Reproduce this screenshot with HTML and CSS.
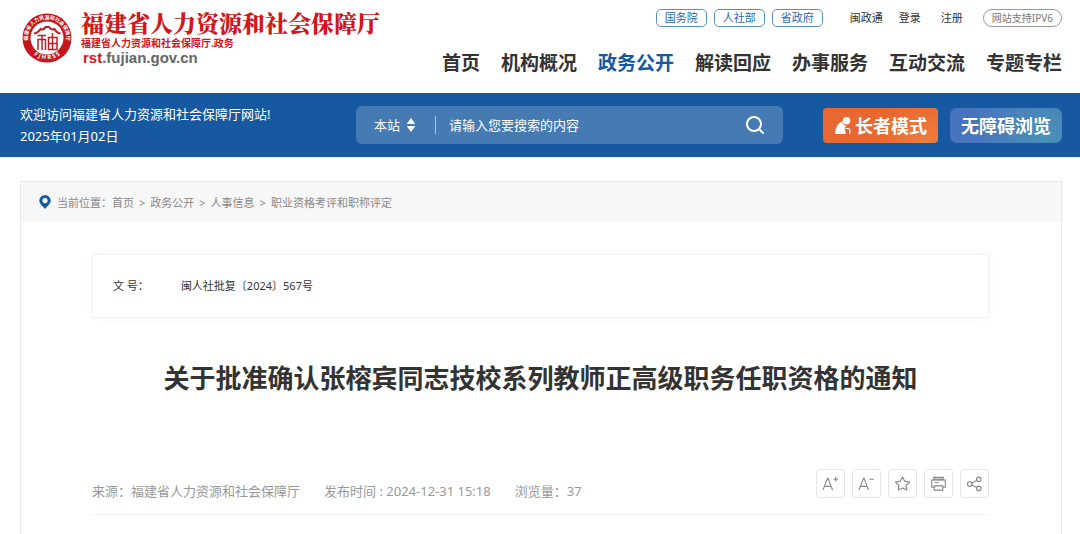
FILE: index.html
```html
<!DOCTYPE html>
<html lang="zh-CN">
<head>
  <meta charset="utf-8">
  <title>福建省人力资源和社会保障厅</title>
  <link rel="stylesheet" href="styles.css">
</head>
<body>
  <header class="header">
    <a class="logo" href="#">
      <svg class="seal" viewBox="0 0 100 100">
        <defs>
          <path id="arc-top" d="M14 64 A38.500 38.500 0 1 1 86 64"/>
          <path id="arc-bottom" d="M9 66 A45 45 0 0 0 91 66"/>
        </defs>
        <circle cx="50" cy="50" r="49" fill="#c4161c"/>
        <circle cx="50" cy="50" r="33" fill="#fff"/>
        <text class="seal-cn"><textPath href="#arc-top" startOffset="50%">福建省人力资源和社会保障厅</textPath></text>
        <text class="seal-en"><textPath href="#arc-bottom" startOffset="50%">F J H R S S</textPath></text>
        <g fill="none" stroke="#b5232a" stroke-width="4">
          <path d="M24 41 Q32 40 37 32 Q44 35 47 28 H54 Q58 35 65 32 Q69 40 77 41"/>
          <path d="M31 45 H48 M40 45 V74 M32 74 V53 H47 V74" stroke-width="3"/>
          <path d="M61 40 V73 M53 73 V49 H70 V73 Z M53 61 H70" stroke-width="3"/>
        </g>
      </svg>
      <span class="logo-text">
        <span class="logo-title">福建省人力资源和社会保障厅</span>
        <span class="logo-sub">福建省人力资源和社会保障厅.政务</span>
        <span class="logo-url"><b>rst</b>.fujian.gov.cn</span>
      </span>
    </a>
    <div class="header-right">
      <div class="top-links">
        <a class="tag" href="#">国务院</a>
        <a class="tag" href="#">人社部</a>
        <a class="tag" href="#">省政府</a>
        <div class="account">
          <a href="#">闽政通</a>
          <a href="#">登录</a>
          <a class="register" href="#">注册</a>
        </div>
        <span class="ipv6">网站支持IPV6</span>
      </div>
      <nav class="nav">
        <a href="#">首页</a>
        <a href="#">机构概况</a>
        <a class="active" href="#">政务公开</a>
        <a href="#">解读回应</a>
        <a href="#">办事服务</a>
        <a href="#">互动交流</a>
        <a href="#">专题专栏</a>
      </nav>
    </div>
  </header>

  <div class="bar">
    <div class="welcome">
      <div>欢迎访问福建省人力资源和社会保障厅网站!</div>
      <div>2025年01月02日</div>
    </div>
    <form class="search">
      <div class="scope">
        <select aria-label="搜索范围">
          <option>本站</option>
        </select>
        <svg width="8" height="14" viewBox="0 0 8 14" fill="#fff">
          <path d="M4 0 L8 5.5 Q8 6 7.5 6 H.5 Q0 6 0 5.5 Z M4 14 L8 8.5 Q8 8 7.5 8 H.5 Q0 8 0 8.5 Z"/>
        </svg>
      </div>
      <input type="text" aria-label="搜索内容" placeholder="请输入您要搜索的内容">
      <button class="search-btn" type="button" aria-label="搜索">
        <svg width="20" height="20" viewBox="0 0 20 20" fill="none" stroke="#fff" stroke-width="2">
          <circle cx="9" cy="9" r="7"/>
          <path d="M14 14 L18 18" stroke-linecap="round"/>
        </svg>
      </button>
    </form>
    <div class="modes">
      <button class="mode elder" type="button">
        <svg width="16" height="19" viewBox="0 0 16 19" fill="#fff">
          <circle cx="11.500" cy="4.800" r="3.800"/>
          <path d="M7.300 5.500 Q7.800 9.500 11.500 10 L9.500 12 L11 18 H0 Q0 12 3 8.500 Q5 6 7.300 5.500 Z"/>
          <path d="M10.500 12.500 H13 Q14.800 12.500 14.800 14.500 V18" fill="none" stroke="#fff" stroke-width="1.200"/>
        </svg>
        长者模式
      </button>
      <button class="mode barrier" type="button">无障碍浏览</button>
    </div>
  </div>

  <main class="page">
    <div class="crumbs">
      <svg width="12" height="14" viewBox="0 0 12 14">
        <path d="M6 0 A5.700 5.700 0 0 1 11.700 5.700 C11.700 9 8 11 6 14 C4 11 .3 9 .3 5.700 A5.700 5.700 0 0 1 6 0 Z" fill="#1759a0"/>
        <circle cx="6" cy="5.600" r="2.600" fill="#fff"/>
      </svg>
      <span>当前位置：</span>
      <a href="#">首页</a><i>&gt;</i>
      <a href="#">政务公开</a><i>&gt;</i>
      <a href="#">人事信息</a><i>&gt;</i>
      <a href="#">职业资格考评和职称评定</a>
    </div>

    <article class="article">
      <dl class="doc-info">
        <dt>文 号：</dt>
        <dd>闽人社批复〔2024〕567号</dd>
      </dl>
      <h1>关于批准确认张榕宾同志技校系列教师正高级职务任职资格的通知</h1>
      <div class="meta">
        <div class="meta-text">
          <span>来源：福建省人力资源和社会保障厅</span>
          <span>发布时间 : 2024-12-31 15:18</span>
          <span>浏览量：37</span>
        </div>
        <div class="tools">
          <button type="button" aria-label="放大字号">
            <svg viewBox="0 0 18 18"><path d="M1 16 L5.800 3.500 H6.400 L11.200 16 M2.800 12 H9.400 M12 4.500 H17 M14.500 2 V7"/></svg>
          </button>
          <button type="button" aria-label="缩小字号">
            <svg viewBox="0 0 18 18"><path d="M1 16 L5.800 3.500 H6.400 L11.200 16 M2.800 12 H9.400 M12 4.500 H17"/></svg>
          </button>
          <button type="button" aria-label="收藏">
            <svg viewBox="0 0 18 18"><path d="M9 2 L11.300 6.500 L16.500 7.400 L12.800 11 L13.600 16 L9 13.800 L4.400 16 L5.200 11 L1.500 7.400 L6.700 6.500 Z" stroke-linejoin="round"/></svg>
          </button>
          <button type="button" aria-label="打印">
            <svg viewBox="0 0 18 18"><path d="M4 5 V2.500 H14 V5 Z" fill="#ccc"/><path d="M4.500 13 H1.800 V5.300 H16.200 V13 H13.500 M4.500 11.500 H13.500 V16 H4.500 Z M5 8 H9"/></svg>
          </button>
          <button type="button" aria-label="分享">
            <svg viewBox="0 0 18 18"><circle cx="4" cy="9.500" r="2.400"/><circle cx="13.500" cy="4.600" r="2.400"/><circle cx="13.500" cy="14.200" r="2.400"/><path d="M6.200 8.500 L11.300 5.800 M6.200 10.600 L11.300 13.200"/></svg>
          </button>
        </div>
      </div>
    </article>
  </main>
</body>
</html>
```

FILE: styles.css
```css
* {
  box-sizing: border-box;
}

body {
  margin: 0;
  min-height: 100vh;
  display: flex;
  flex-direction: column;
  background: #fff;
  color: #333;
  font-family: "Noto Sans", "Noto Sans CJK SC", sans-serif;
  font-size: 13px;
}

a {
  color: inherit;
  text-decoration: none;
}

button,
input,
select {
  margin: 0;
  padding: 0;
  border: 0;
  background: none;
  color: inherit;
  font: inherit;
}

/* header */
.header {
  display: flex;
  justify-content: space-between;
  height: 93px;
  padding: 9px 18px 0 22px;
}

.logo {
  display: flex;
  align-items: flex-start;
  gap: 9px;
}

.seal {
  width: 50px;
  height: 50px;
  margin-top: 4px;
}

.seal text {
  fill: #fff;
  text-anchor: middle;
  font-weight: bold;
}

.seal-cn {
  font-size: 10px;
}

.seal-en {
  font-size: 12px;
}

.logo-text {
  display: flex;
  flex-direction: column;
  color: #d2161a;
  white-space: nowrap;
}

.logo-title {
  font-family: "Noto Serif CJK SC", "Noto Sans CJK SC", serif;
  font-size: 23px;
  font-weight: 900;
  line-height: 27px;
}

.logo-sub {
  font-size: 10px;
  font-weight: bold;
  line-height: 14px;
}

.logo-url {
  padding-left: 2px;
  color: #666;
  font-family: "Liberation Sans", Arial, sans-serif;
  font-size: 15px;
  font-weight: bold;
  line-height: 15px;
}

.logo-url b {
  color: #d2161a;
}

.header-right {
  display: flex;
  flex-direction: column;
  align-items: flex-end;
  gap: 22px;
}

.top-links {
  display: flex;
  align-items: center;
  gap: 7px;
  font-size: 11px;
  line-height: 16px;
}

.tag {
  padding: 0 8px;
  border: 1px solid #5b8fc7;
  border-radius: 5px;
  color: #2a68ad;
}

.account {
  display: flex;
  gap: 16px;
  margin: 0 13px 0 20px;
}

.register {
  margin-left: 4px;
}

.ipv6 {
  padding: 0 8px;
  border: 1px solid #999;
  border-radius: 9px;
  color: #777;
  font-size: 10px;
}

.nav {
  display: flex;
  gap: 21px;
  font-size: 19px;
  font-weight: bold;
  line-height: 28px;
}

.nav .active {
  color: #1759a0;
}

/* blue bar */
.bar {
  display: grid;
  grid-template-columns: 336fr 427fr 279px;
  align-items: center;
  height: 64px;
  padding: 0 18px 0 20px;
  background: #1759a0;
  color: #fff;
}

.welcome {
  line-height: 22px;
}

.search {
  display: flex;
  align-items: center;
  height: 38px;
  padding: 0 18px;
  border-radius: 6px;
  background: #457ab3;
}

.scope {
  display: flex;
  align-items: center;
  gap: 6px;
  padding-right: 20px;
  border-right: 1px solid #a9c3de;
}

.scope select {
  appearance: none;
}

.search input {
  flex: 1;
  min-width: 0;
  padding-left: 13px;
  outline: 0;
}

.search input::placeholder {
  color: #fff;
  opacity: 1;
}

.search-btn svg,
.mode svg,
.tools svg {
  display: block;
}

.modes {
  display: flex;
  justify-content: flex-end;
  gap: 12px;
}

.mode {
  display: flex;
  align-items: center;
  gap: 4px;
  height: 35px;
  padding: 0 11px;
  font-size: 18px;
  font-weight: bold;
}

.elder {
  padding-left: 12px;
  border-radius: 4px;
  background: radial-gradient(circle at 90% 110%, #ec8040, #e96731 50px);
}

.barrier {
  border-radius: 7px;
  background: radial-gradient(circle at 85% 80%, #4991b6, #4873bf 75px);
}

/* content */
.page {
  flex: 1;
  margin: 24px 18px 0 20px;
  border: 1px solid #e8e8e8;
  border-bottom: 0;
}

.crumbs {
  display: flex;
  align-items: center;
  height: 40px;
  padding-left: 18px;
  background: #f7f7f7;
  color: #888;
  font-size: 11px;
}

.crumbs svg {
  margin-right: 6px;
}

.crumbs i {
  margin: 0 5px;
  font-style: normal;
}

.article {
  padding: 32px 72px 0 71px;
}

.doc-info {
  display: flex;
  gap: 32px;
  margin: 0;
  padding: 20px;
  border: 1px solid #f0f0f0;
  box-shadow: 0 0 10px rgba(0, 0, 0, 0.03);
  font-size: 11px;
  line-height: 22px;
}

.doc-info dd {
  margin: 0;
}

h1 {
  margin: 40px 0 71px;
  font-size: 26px;
  line-height: 40px;
  text-align: center;
}

.meta {
  display: flex;
  justify-content: space-between;
  padding-bottom: 13px;
  border-bottom: 1px solid #f3f3f3;
}

.meta-text {
  display: flex;
  gap: 24px;
  padding-top: 12px;
  color: #999;
  line-height: 20px;
}

.tools {
  display: flex;
  gap: 7px;
}

.tools button {
  width: 29px;
  height: 29px;
  padding: 5px;
  border: 1px solid #e5e5e5;
  border-radius: 3px;
}

.tools svg {
  fill: none;
  stroke: #888;
  stroke-width: 1.2;
}
```
